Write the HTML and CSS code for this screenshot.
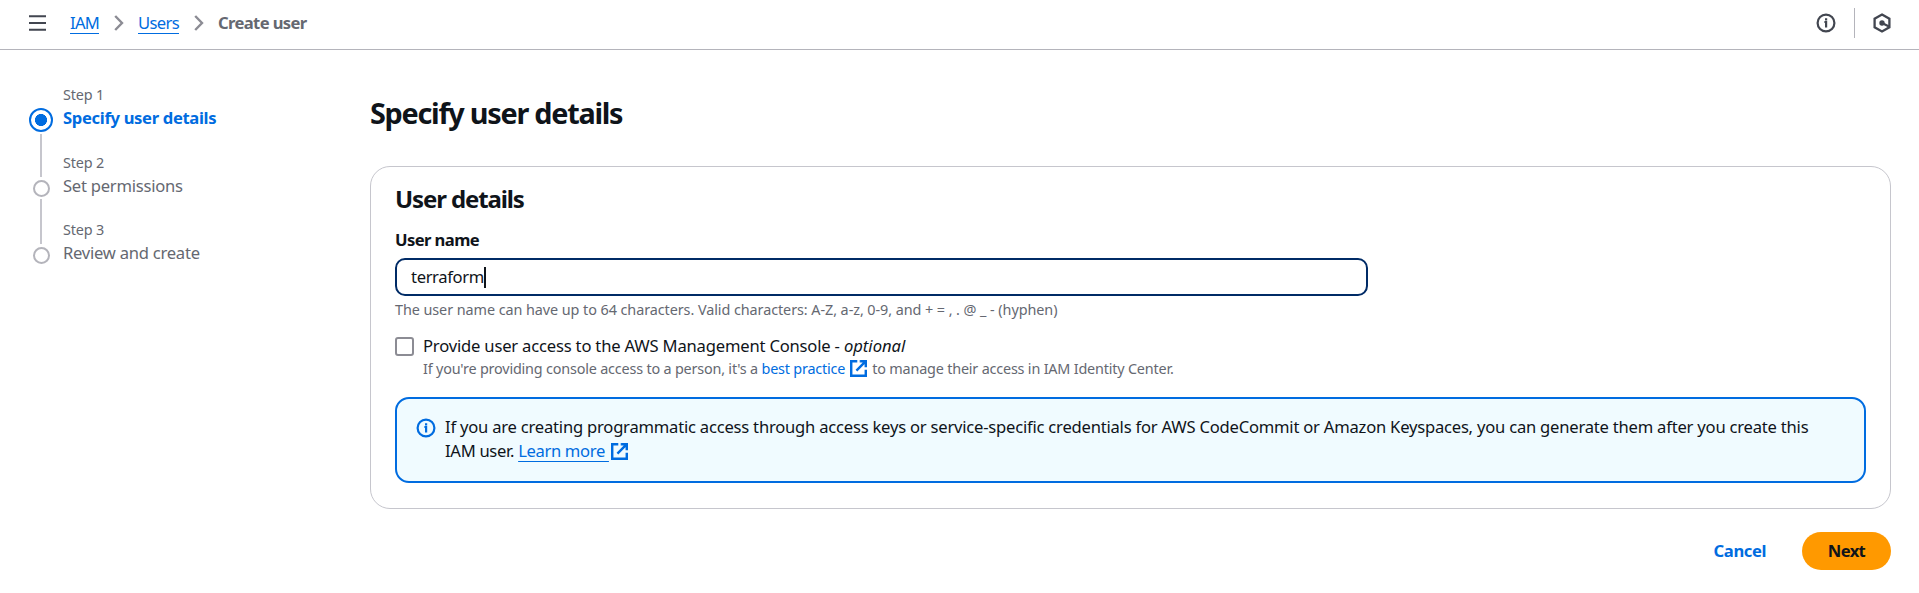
FILE: index.html
```html
<!DOCTYPE html>
<html lang="en">
<head>
<meta charset="utf-8">
<title>Create user | IAM</title>
<link rel="stylesheet" href="styles.css">
</head>
<body>
<svg class="defs" width="0" height="0" aria-hidden="true">
  <symbol id="external" viewBox="1 1 14 14"><path d="M10 2h4v4M6.3 9.7 14 2M14 9.05V14H2V2h5" fill="none" stroke="currentColor" stroke-width="2"/><path d="M9 1h1v2H9zM13 6h2v1h-2z" fill="currentColor"/></symbol>
  <symbol id="info" viewBox="0 0 20 20"><circle cx="10" cy="10" r="8.4" fill="none" stroke="currentColor" stroke-width="2.2"/><path d="M8.4 9H10.1V14.6M10.1 5.2V7.4" fill="none" stroke="currentColor" stroke-width="2.2"/></symbol>
  <symbol id="chevron" viewBox="0 0 10 16"><path d="M1.2 1 8 8 1.2 15" fill="none" stroke="currentColor" stroke-width="2.4"/></symbol>
</svg>
<header class="topbar">
  <svg class="menu" viewBox="0 0 17 16"><path d="M0 1.3h17M0 8h17M0 14.7h17" stroke="currentColor" stroke-width="2"/></svg>
  <nav class="crumbs">
    <a class="crumb crumb-iam" href="#"><span class="t">IAM</span></a>
    <svg class="chev"><use href="#chevron"/></svg>
    <a class="crumb crumb-users" href="#"><span class="t">Users</span></a>
    <svg class="chev"><use href="#chevron"/></svg>
    <span class="current t">Create user</span>
  </nav>
  <div class="tools">
    <svg class="tool-info"><use href="#info"/></svg>
    <span class="divider"></span>
    <svg class="tool-hex" viewBox="0 0 18 20"><path d="M9 1.5 16.4 5.7V14.3L9 18.5 1.6 14.3V5.7Z" fill="none" stroke="currentColor" stroke-width="2.3"/><circle cx="9" cy="10" r="2.7" fill="currentColor"/><path d="M9 10 16 13.6" stroke="currentColor" stroke-width="2.2"/></svg>
  </div>
</header>
<div class="page">
  <aside class="wizard">
    <div class="track"><i class="dot active"></i><i class="bar"></i><i class="dot"></i><i class="bar bar-2"></i><i class="dot"></i></div>
    <ol class="steps">
      <li><div class="num"><span class="t">Step 1</span></div><div class="name on"><span class="t">Specify user details</span></div></li>
      <li><div class="num"><span class="t">Step 2</span></div><div class="name"><span class="t">Set permissions</span></div></li>
      <li><div class="num"><span class="t">Step 3</span></div><div class="name"><span class="t">Review and create</span></div></li>
    </ol>
  </aside>
  <main class="main">
    <h1><span class="t">Specify user details</span></h1>
    <section class="card">
      <h2><span class="t">User details</span></h2>
      <div class="label"><span class="t">User name</span></div>
      <div class="input"><span class="value t">terraform</span><i class="caret"></i></div>
      <p class="hint"><span class="t">The user name can have up to 64 characters. Valid characters: A-Z, a-z, 0-9, and + = , . @ _ - (hyphen)</span></p>
      <div class="check">
        <i class="box"></i>
        <div>
          <div class="check-label"><span class="t">Provide user access to the AWS Management Console - </span><em class="t">optional</em></div>
          <div class="desc"><span class="t">If you're providing console access to a person, it's a </span><a class="best t" href="#">best practice</a><svg class="ext"><use href="#external"/></svg><span class="t">to manage their access in IAM Identity Center.</span></div>
        </div>
      </div>
      <div class="alert">
        <svg class="alert-icon"><use href="#info"/></svg>
        <div class="alert-text"><span class="t long">If you are creating programmatic access through access keys or service-specific credentials for AWS CodeCommit or Amazon Keyspaces, you can generate them after you create this</span><br><span class="t iam-user">IAM user. </span><a class="learn t" href="#">Learn more </a><svg class="ext ext-lg"><use href="#external"/></svg></div>
      </div>
    </section>
    <div class="actions"><a class="cancel t" href="#">Cancel</a><button class="next"><span class="t">Next</span></button></div>
  </main>
</div>
</body>
</html>
```
FILE: styles.css
```css
* { box-sizing: border-box; }
body { margin: 0; background: #fff; color: #0f141a; font: 16.6px/24px "Noto Sans", sans-serif; }
a { color: #006ce0; text-decoration: none; }
.defs { position: absolute; }
svg { display: block; flex: none; }
.t { white-space: pre; }
.topbar { height: 50px; padding: 0 28px 3px 29px; display: flex; align-items: center; border-bottom: 1px solid #b4b4bb; }
.menu { width: 17px; height: 16px; margin-right: 24px; color: #424650; }
.crumbs { display: flex; align-items: center; }
.crumb { height: 23px; line-height: 24px; margin-top: -1px; border-bottom: 1px solid #006ce0; }
.crumb-iam { letter-spacing: -0.75px; }
.crumb-users { letter-spacing: -0.65px; }
.chev { width: 10px; height: 16px; margin: 0 14px 0 15px; color: #8c8c94; }
.current { font-weight: 700; color: #656871; letter-spacing: -0.63px; }
.tools { margin-left: auto; display: flex; align-items: center; color: #424650; }
.tool-info { width: 20px; height: 20px; }
.divider { width: 1px; height: 30px; background: #b4b4bb; margin: 0 18px; }
.tool-hex { width: 18px; height: 20px; }
.page { display: flex; }
.wizard { width: 370px; display: flex; padding: 35px 0 0 29px; }
.track { width: 24px; margin: 23px 10px 0 0; display: flex; flex-direction: column; align-items: center; }
.dot { width: 17px; height: 17px; border: 2px solid #b4b4bb; border-radius: 50%; }
.dot.active { width: 24px; height: 24px; border-color: #006ce0; background: radial-gradient(circle, #006ce0 5.7px, #fff 6.3px); }
.bar { width: 2px; height: 43px; margin: 2px 0 3px; background: #c6c6cd; }
.bar-2 { height: 45px; margin: 2px 0 3px; }
.steps { list-style: none; margin: 0; padding: 0; }
.steps li { height: 67.5px; color: #656871; }
.num { font-size: 14.4px; line-height: 20px; letter-spacing: -0.15px; }
.name { padding-top: 1px; letter-spacing: -0.25px; }
.name.on { font-weight: 700; color: #006ce0; letter-spacing: -0.33px; }
.main { width: 1521px; padding-top: 45px; }
h1 { margin: 0; font-size: 28.8px; line-height: 36px; letter-spacing: -1.25px; }
.card { margin-top: 35px; height: 343px; border: 1px solid #c6c6cd; border-radius: 20px; padding: 17px 24px 0; }
h2 { margin: 0; font-size: 24px; line-height: 30px; letter-spacing: -1.12px; }
.label { margin-top: 14px; font-weight: 700; letter-spacing: -0.58px; }
.input { width: 973px; height: 38px; margin-top: 6px; border: 2px solid #002b66; border-radius: 10px; padding: 0 14px; display: flex; align-items: center; letter-spacing: -0.36px; }
.caret { width: 2px; height: 21px; background: #0f141a; }
.hint { margin: 4px 0 0; font-size: 14.4px; line-height: 20px; color: #656871; letter-spacing: -0.07px; }
.check { display: flex; margin-top: 14px; letter-spacing: -0.19px; }
.box { width: 19px; height: 19px; margin: 3px 9px 0 0; border: 2px solid #8c8c94; border-radius: 3px; }
.check-label em { letter-spacing: 0; }
.desc { display: flex; align-items: center; height: 20px; padding-top: 1px; font-size: 14.4px; line-height: 20px; color: #656871; }
.ext { width: 17px; height: 17px; margin: 0 5px; color: #006ce0; }
.alert { margin-top: 19px; height: 86px; border: 2px solid #006ce0; border-radius: 14px; background: #f0fbff; display: flex; padding: 16px 19px; }
.alert-icon { width: 20px; height: 20px; margin: 3px 9px 0 0; color: #006ce0; }
.long { letter-spacing: -0.22px; }
.iam-user { letter-spacing: -0.3px; }
.learn { letter-spacing: -0.34px; text-decoration: underline 1px; text-underline-offset: 4px; text-decoration-skip-ink: none; }
.ext-lg { display: inline-block; margin: 0 2px; vertical-align: -3px; }
.actions { display: flex; justify-content: flex-end; align-items: center; margin-top: 23px; font-weight: 700; }
.cancel { margin-right: 36px; letter-spacing: -0.4px; }
.next { width: 89px; height: 38px; border: 0; border-radius: 19px; background: #ff9900; color: #0f141a; font: inherit; letter-spacing: -0.6px; padding: 0 0 1px; }
```
